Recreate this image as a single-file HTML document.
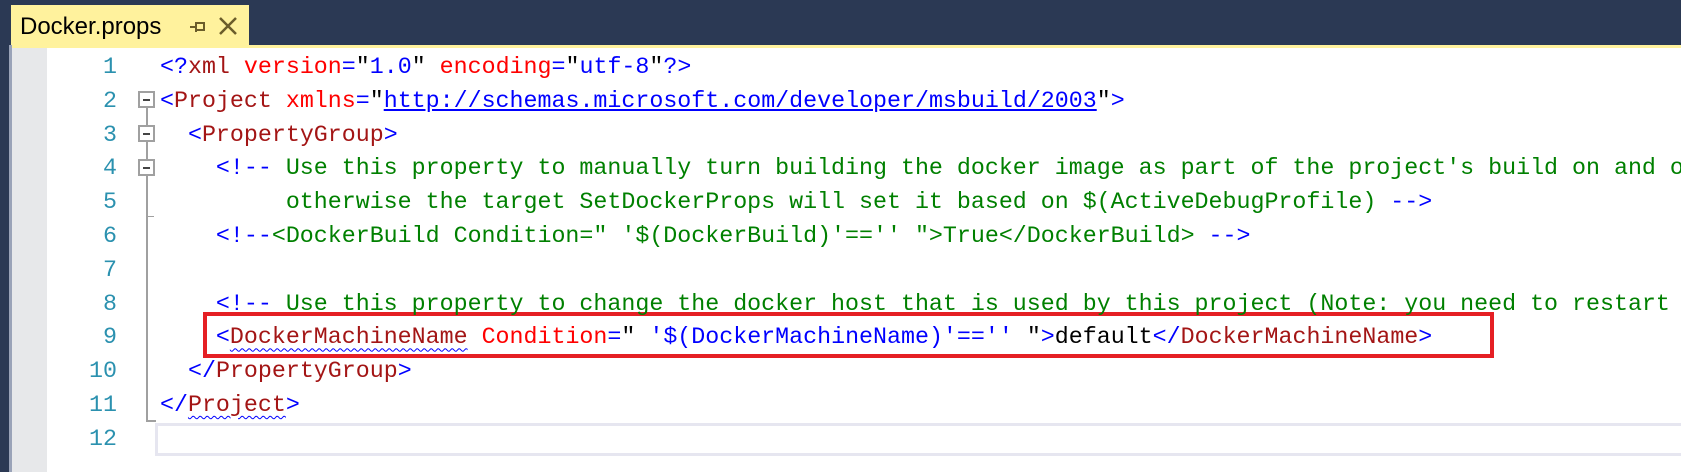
<!DOCTYPE html>
<html><head><meta charset="utf-8"><style>
body{margin:0;width:1681px;height:472px;overflow:hidden;background:#fff;position:relative;font-family:"Liberation Sans",sans-serif}
.top{position:absolute;left:0;top:0;width:1681px;height:48px;background:#2b3954}
.ybar{position:absolute;left:11px;top:45px;width:1670px;height:3px;background:#fff29d}
.tab{position:absolute;left:11px;top:5px;width:238px;height:43px;background:#fff29d;font-size:24px;color:#000}
.tab span{position:absolute;left:9px;top:8px}
.side{position:absolute;left:0;top:45px;width:11px;height:427px;background:#2b3954}
.side2{position:absolute;left:9px;top:45px;width:3px;height:427px;background:#9aa3b8}
.gut{position:absolute;left:12px;top:48px;width:35px;height:424px;background:#e7e8ea}
.ln{position:absolute;left:47px;width:70px;text-align:right;color:#2b91af;font:23.3px "Liberation Mono",monospace;line-height:33.8px}
.code{position:absolute;left:160px;white-space:pre;font:23.3px "Liberation Mono",monospace;line-height:33.8px}
.b{color:#0000ff}.t{color:#a31515}.a{color:#ff0000}.c{color:#008000}.k{color:#000}
.u{color:#0000ff;text-decoration:underline}
.sq{text-decoration:underline wavy #0000ff;text-decoration-thickness:1px;text-underline-offset:4px}
.fold{position:absolute;left:138px;width:17px;height:17px;border:2px solid #a0a0a0;box-sizing:border-box;background:#fff}
.fold:after{content:"";position:absolute;left:3px;top:6px;width:7px;height:2px;background:#444}
</style></head><body>
<div class="top"></div><div class="ybar"></div>
<div class="tab"><span>Docker.props</span>
<svg style="position:absolute;left:178px;top:13px" width="20" height="18" viewBox="0 0 20 18"><path d="M1 9H7M7 4V14M7 5H15V12H7M9 12H15" stroke="#6b5d2a" stroke-width="2" fill="none"/></svg>
<svg style="position:absolute;left:206px;top:10px" width="22" height="22" viewBox="0 0 22 22"><path d="M3 3L19 19M19 3L3 19" stroke="#6b5d2a" stroke-width="2.5"/></svg>
</div>
<div class="side"></div><div class="side2"></div><div class="gut"></div>
<div style="position:absolute;left:146px;top:108px;width:2px;height:314px;background:#a0a0a0"></div>
<div style="position:absolute;left:146px;top:420px;width:10px;height:2px;background:#a0a0a0"></div>
<div style="position:absolute;left:146px;top:216px;width:8px;height:1px;background:#a0a0a0"></div>
<div class="fold" style="top:91px"></div><div class="fold" style="top:125px"></div><div class="fold" style="top:159px"></div>
<div style="position:absolute;left:155px;top:423px;width:1526px;height:33px;border:3px solid #e6e6f0;border-right:none;box-sizing:border-box"></div>
<div style="position:absolute;left:203px;top:312px;width:1291px;height:46px;border:4px solid #e51f24;box-sizing:border-box"></div>
<div class="ln" style="top:51px">1<br>2<br>3<br>4<br>5<br>6<br>7<br>8<br>9<br>10<br>11<br>12</div>
<div class="code" style="top:51px"><span class="b">&lt;?</span><span class="t">xml</span> <span class="a">version</span><span class="b">=</span><span class="k">"</span><span class="b">1.0</span><span class="k">"</span> <span class="a">encoding</span><span class="b">=</span><span class="k">"</span><span class="b">utf-8</span><span class="k">"</span><span class="b">?&gt;</span>
<span class="b">&lt;</span><span class="t">Project</span> <span class="a">xmlns</span><span class="b">=</span><span class="k">"</span><span class="u">http://schemas.microsoft.com/developer/msbuild/2003</span><span class="k">"</span><span class="b">&gt;</span>
  <span class="b">&lt;</span><span class="t">PropertyGroup</span><span class="b">&gt;</span>
    <span class="b">&lt;!--</span><span class="c"> Use this property to manually turn building the docker image as part of the project's build on and off</span>
<span class="c">         otherwise the target SetDockerProps will set it based on $(ActiveDebugProfile) </span><span class="b">--&gt;</span>
    <span class="b">&lt;!--</span><span class="c">&lt;DockerBuild Condition=" '$(DockerBuild)'=='' "&gt;True&lt;/DockerBuild&gt; </span><span class="b">--&gt;</span>

    <span class="b">&lt;!--</span><span class="c"> Use this property to change the docker host that is used by this project (Note: you need to restart</span>
    <span class="b">&lt;</span><span class="t sq">DockerMachineName</span> <span class="a">Condition</span><span class="b">=</span><span class="k">"</span><span class="b"> '$(DockerMachineName)'=='' </span><span class="k">"</span><span class="b">&gt;</span><span class="k">default</span><span class="b">&lt;/</span><span class="t">DockerMachineName</span><span class="b">&gt;</span>
  <span class="b">&lt;/</span><span class="t">PropertyGroup</span><span class="b">&gt;</span>
<span class="b">&lt;/</span><span class="t sq">Project</span><span class="b">&gt;</span>
</div>
</body></html>
